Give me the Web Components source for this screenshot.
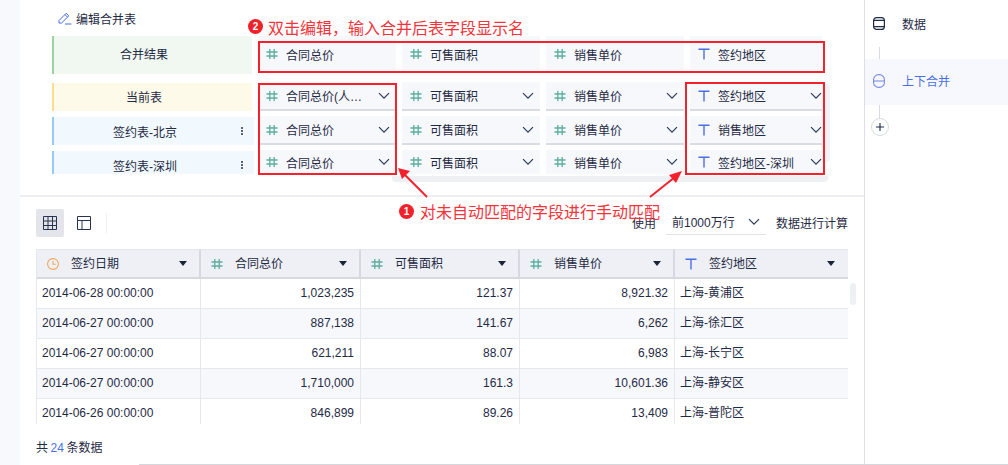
<!DOCTYPE html>
<html>
<head>
<meta charset="utf-8">
<style>
html,body{margin:0;height:100%;overflow:hidden}
body{font:12px "Liberation Sans","Noto Sans CJK SC",sans-serif;color:#1f2a44;background:#fff}
</style>
</head>
<body>
<app-shell></app-shell>
<script>
const ICONS = {
    hash: `<svg width="12" height="12" viewBox="0 0 12 12" fill="none" stroke="#5cae9f" stroke-width="1.3"><path d="M3.8 1v10M8.2 1v10M.5 4h11M.5 8h11"/></svg>`,
    text: `<svg width="12" height="12" viewBox="0 0 12 12" fill="none" stroke="#4a6fe3" stroke-width="1.4"><path d="M.5 1.2h11M6 1.2V11.5"/></svg>`,
    chevron: `<svg width="12" height="8" viewBox="0 0 12 8" fill="none" stroke="#2b3a55" stroke-width="1.2"><path d="M1 1.2l5 5 5-5"/></svg>`,
    clock: `<svg width="12" height="12" viewBox="0 0 12 12" fill="none" stroke="#f2a65e" stroke-width="1.1"><circle cx="6" cy="6" r="5.4"/><path d="M6 3v3.2h2.8"/></svg>`,
    caret: `<svg width="8" height="5" viewBox="0 0 8 5" fill="#1c2438"><path d="M0 0h8L4 5z"/></svg>`
};

class FieldCell extends HTMLElement{
    connectedCallback(){
        const icon = this.getAttribute('type') === 'text' ? ICONS.text : ICONS.hash;
        const arrow = this.hasAttribute('fixed') ? '' : `<span class="arrow">${ICONS.chevron}</span>`;
        this.attachShadow({mode:"open"}).innerHTML = `
            <style>
                :host{display:flex;align-items:center;box-sizing:border-box;background:#f7f8fc;border-bottom:2px solid #d9dce5;height:29px;padding:0 6px 0 8px;min-width:0;overflow:hidden;font-size:12px;color:#1f2a44}
                :host([fixed]){border-bottom:0;height:35px;padding-top:1px}
                :host([narrow]){padding-right:0}
                :host([clipped]){height:24px;border-bottom:0;padding-bottom:2px;padding-top:2px}
                .icon{flex:none;width:12px;height:12px;margin-right:8px;display:flex}
                .name{flex:1;min-width:0;white-space:nowrap;overflow:hidden;text-overflow:ellipsis}
                .arrow{flex:none;display:flex;margin-left:6px;width:12px}
            </style>
            <span class="icon">${icon}</span><span class="name"><slot></slot></span>${arrow}`;
    }
}
customElements.define("field-cell", FieldCell);

class LabelCell extends HTMLElement{
    connectedCallback(){
        const more = this.hasAttribute('more') ? `<span class="more"><i></i><i></i><i></i></span>` : '';
        this.attachShadow({mode:"open"}).innerHTML = `
            <style>
                :host{display:flex;align-items:center;justify-content:center;position:relative;box-sizing:border-box;border-left:2px solid var(--bar);background:var(--bg);height:28px;margin-top:1px;font-size:12px;color:#1f2a44;padding-right:18px}
                :host([tone=green]){--bar:#9ad2a0;--bg:#f0f8f1;width:200px;height:38px;margin-top:0;padding-bottom:3px}
                :host([tone=yellow]){--bar:#fbdc8e;--bg:#fefaea;width:200px;padding-bottom:1px}
                :host([tone=blue]){--bar:#93cdf7;--bg:#f1f9fe;width:202px;padding-top:1px}
                .more{position:absolute;right:11px;top:10px;display:flex;flex-direction:column;gap:1px}
                .more i{width:2px;height:2px;background:#5a6478}
            </style>
            <slot></slot>${more}`;
    }
}
customElements.define("label-cell", LabelCell);

class MergeEditor extends HTMLElement{
    connectedCallback(){
        const cols = [['hash','合同总价'],['hash','可售面积'],['hash','销售单价'],['text','签约地区']];
        const rows = [
            ['yellow','当前表',false,['合同总价(人民币)','可售面积','销售单价','签约地区']],
            ['blue','签约表-北京',true,['合同总价','可售面积','销售单价','销售地区']],
            ['blue','签约表-深圳',true,['合同总价','可售面积','销售单价','签约地区-深圳']]
        ];
        const head = cols.map((c,i)=>`<field-cell fixed type="${c[0]}" ${i==3?'narrow':''}>${c[1]}</field-cell>`).join('');
        const body = rows.map((r,ri)=>`
            <label-cell tone="${r[0]}" ${r[2]?'more':''}>${r[1]}</label-cell>
            ${r[3].map((t,i)=>`<field-cell type="${cols[i][0]}" ${i==3?'narrow':''} ${ri==2?'clipped':''}>${t}</field-cell>`).join('')}`).join('');
        this.attachShadow({mode:"open"}).innerHTML = `
            <style>
                :host{display:block;box-sizing:border-box;height:197px;padding:11px 0 0 32px;border-bottom:2px solid #eceef3;position:relative}
                .title{display:flex;align-items:center;height:14px;margin-left:6px;margin-bottom:11px;gap:4px;font-size:12px;color:#1f2a44}
                .grid{display:grid;grid-template-columns:200px 138px 138px 138px 132px;column-gap:6px;align-items:start}
                .lower{margin-top:8px;row-gap:5px;height:92px;overflow:hidden}
                .track-h{position:absolute;left:372px;top:176px;width:436px;height:6px;border-radius:0 0 4px 4px;background:#eff0f3}
                .track-v{position:absolute;left:802px;top:84px;width:8px;height:78px;border-radius:0 4px 4px 0;background:#f1f2f5}
            </style>
            <div class="title">
                <svg width="14" height="14" viewBox="0 0 14 14" fill="none" stroke="#4a6fe3" stroke-width="1"><path d="M1 9.5L8.2 2.3l2.6 2.6L3.6 12H1zM7 3.6l2.6 2.6M7 13h6.5"/></svg>
                编辑合并表
            </div>
            <div class="track-h"></div><div class="track-v"></div>
            <div class="grid"><label-cell tone="green">合并结果</label-cell>${head}</div>
            <div class="grid lower">${body}</div>`;
    }
}
customElements.define("merge-editor", MergeEditor);

class ViewToolbar extends HTMLElement{
    connectedCallback(){
        this.attachShadow({mode:"open"}).innerHTML = `
            <style>
                :host{display:flex;align-items:flex-start;justify-content:space-between;padding:12px 16px 0;height:40px;color:#1f2a44}
                .left{display:flex;align-items:center}
                .btn{width:28px;height:28px;border-radius:2px;display:flex;align-items:center;justify-content:center}
                .btn.on{background:#e3e5ea}
                .btn + .btn{margin-left:6px}
                .sep{width:1px;height:20px;background:#eceef3;margin-left:8px}
                .right{display:flex;align-items:center;height:26px}
                .select{box-sizing:border-box;width:100px;height:26px;margin:0 10px;padding:0 6px;border-bottom:1px solid #dfe2ea;display:flex;align-items:center;justify-content:space-between}
            </style>
            <div class="left">
                <div class="btn on"><svg width="14" height="14" viewBox="0 0 14 14" fill="none" stroke="#28344f"><path d="M.5.5h13v13H.5zM.5 5h13M.5 9.5h13M5 .5v13M9.5.5v13"/></svg></div>
                <div class="btn"><svg width="14" height="14" viewBox="0 0 14 14" fill="none" stroke="#28344f"><path d="M.5.5h13v13H.5zM.5 4.5h13M5 4.5v9"/></svg></div>
                <div class="sep"></div>
            </div>
            <div class="right">使用<span class="select">前1000万行 ${ICONS.chevron}</span>数据进行计算</div>`;
    }
}
customElements.define("view-toolbar", ViewToolbar);

class DataTable extends HTMLElement{
    connectedCallback(){
        const heads = [['clock','签约日期'],['hash','合同总价'],['hash','可售面积'],['hash','销售单价'],['text','签约地区']];
        const rows = [
            ['2014-06-28 00:00:00','1,023,235','121.37','8,921.32','上海-黄浦区'],
            ['2014-06-27 00:00:00','887,138','141.67','6,262','上海-徐汇区'],
            ['2014-06-27 00:00:00','621,211','88.07','6,983','上海-长宁区'],
            ['2014-06-27 00:00:00','1,710,000','161.3','10,601.36','上海-静安区'],
            ['2014-06-26 00:00:00','846,899','89.26','13,409','上海-普陀区']
        ];
        const head = heads.map(h=>`<div class="th"><span class="ic">${ICONS[h[0]]}</span><span class="tt">${h[1]}</span>${ICONS.caret}</div>`).join('');
        const body = rows.map((r,ri)=>r.map((t,i)=>`<div class="td ${ri%2?'alt':''} ${i>0&&i<4?'num':''} ${i==4?'cjk':''}">${t}</div>`).join('')).join('');
        this.attachShadow({mode:"open"}).innerHTML = `
            <style>
                :host{display:block;position:relative;margin:0 16px;height:175px;color:#1f2a44}
                .wrap{height:175px;overflow:hidden}
                .grid{display:grid;grid-template-columns:164px 160px 159px 155px 174px;grid-auto-rows:30px;border-left:1px solid #e6e8f0;box-sizing:border-box;width:812px}
                .th{display:flex;align-items:center;box-sizing:border-box;background:#eef0f5;border-top:1px solid #e4e6ed;border-bottom:2px solid #d6d9e2;border-right:2px solid #d6d9e2;padding:0 12px 0 10px}
                .th:nth-child(5){border-right:0;padding-right:14px}
                .ic{display:flex;width:12px;margin-right:12px}
                .tt{flex:1;padding-bottom:2px}
                .td{display:flex;align-items:center;box-sizing:border-box;border-bottom:1px solid #e6e8f0;border-right:1px solid #e6e8f0;padding:0 6px 1px 5px;white-space:nowrap}
                .cjk{padding-bottom:4px}
                .num{justify-content:flex-end}
                .alt{background:#f7f8fc}
                .bar{position:absolute;left:814px;top:34px;width:6px;height:22px;border-radius:3px;background:#eef0f3}
            </style>
            <div class="wrap"><div class="grid">${head}${body}</div></div>
            <div class="bar"></div>`;
    }
}
customElements.define("data-table", DataTable);

class SidePanel extends HTMLElement{
    connectedCallback(){
        this.attachShadow({mode:"open"}).innerHTML = `
            <style>
                :host{display:block;flex:none;width:144px;box-sizing:border-box;border-left:1px solid #dcdfe8;background:#fff;padding-top:12px;color:#1f2a44}
                .step{display:flex;align-items:center;height:23px;padding-left:8px}
                .step svg{margin-right:17px;flex:none}
                .active{box-sizing:border-box;height:46px;padding-bottom:3px;background:#f7f8fd;color:#4a6fe3}
                .line{width:1px;height:13px;background:#d7dae2;margin-left:14px}
                .first{margin-top:12px;height:12px}
                .plus{width:18px;height:18px;box-sizing:border-box;margin:0 0 0 6px;border:1px solid #d7dae2;border-radius:50%;display:flex;align-items:center;justify-content:center;background:#fff}
            </style>
            <div class="step">
                <svg width="12" height="13" viewBox="0 0 12 13" fill="none" stroke="#1f2a44" stroke-width="1.2"><rect x=".6" y=".6" width="10.8" height="11.8" rx="3"/><path d="M.6 3.4h10.8M.6 9.6h10.8"/></svg>
                数据
            </div>
            <div class="line first"></div>
            <div class="step active">
                <svg width="12" height="14" viewBox="0 0 12 14" fill="none" stroke="#7a8cec" stroke-width="1.1"><rect x=".6" y=".6" width="10.8" height="12.8" rx="5"/><path d="M.6 7h10.8"/></svg>
                上下合并
            </div>
            <div class="line"></div>
            <div class="plus"><svg width="8" height="8" viewBox="0 0 8 8" stroke="#1f2a44" stroke-width="1.1"><path d="M4 0v8M0 4h8"/></svg></div>`;
    }
}
customElements.define("side-panel", SidePanel);

// red notes drawn on top of the screenshot
class NoteLayer extends HTMLElement{
    connectedCallback(){
        this.attachShadow({mode:"open"}).innerHTML = `
            <style>
                :host{position:absolute;left:0;top:0;width:1008px;height:465px;pointer-events:none;color:#f5333a;font-size:16px;font-family:"Noto Sans CJK SC",sans-serif}
                .box{position:absolute;box-sizing:border-box;border:2px solid #f5222d}
                .note{position:absolute;white-space:nowrap;line-height:20px}
                .dot{position:absolute;width:15px;height:15px;border-radius:50%;background:#f0212b;color:#fff;font:bold 10px/15px "Liberation Sans",sans-serif;text-align:center}
                .edge{position:absolute;left:139px;top:464px;width:869px;height:1px;background:#d4d7de}
                svg{position:absolute;left:0;top:0}
            </style>
            <div class="box" style="left:258px;top:41px;width:567px;height:32px"></div>
            <div class="box" style="left:258px;top:83px;width:139px;height:92px"></div>
            <div class="box" style="left:685px;top:82px;width:140px;height:93px"></div>
            <span class="dot" style="left:248px;top:19px">2</span>
            <span class="note" style="left:268px;top:17px">双击编辑，输入合并后表字段显示名</span>
            <span class="dot" style="left:399px;top:204px">1</span>
            <span class="note" style="left:420px;top:201px">对未自动匹配的字段进行手动匹配</span>
            <div class="edge"></div>
            <svg width="1008" height="465" fill="#f5222d" stroke="none">
                <path d="M427 197L405 175" stroke="#f5222d" stroke-width="2" fill="none"/>
                <path d="M398 168l12 3-8 8z"/>
                <path d="M650 197L675 177" stroke="#f5222d" stroke-width="2" fill="none"/>
                <path d="M682 171l-6 12-7-8z"/>
            </svg>`;
    }
}
customElements.define("note-layer", NoteLayer);

class AppShell extends HTMLElement{
    connectedCallback(){
        this.attachShadow({mode:"open"}).innerHTML = `
            <style>
                :host{display:flex;position:relative;width:1008px;height:465px;overflow:hidden;background:#f8f9fd}
                .main{width:844px;margin-left:20px;background:#fff;flex:none}
                .foot{display:flex;padding:17px 16px 0;height:20px;line-height:14px;color:#1f2a44}
                .foot b{font-weight:normal;color:#4a6fe3;margin:0 2.5px}
            </style>
            <div class="main">
                <merge-editor></merge-editor>
                <view-toolbar></view-toolbar>
                <data-table></data-table>
                <div class="foot">共<b>24</b>条数据</div>
            </div>
            <side-panel></side-panel>
            <note-layer></note-layer>`;
    }
}
customElements.define("app-shell", AppShell);
</script>
</body>
</html>
